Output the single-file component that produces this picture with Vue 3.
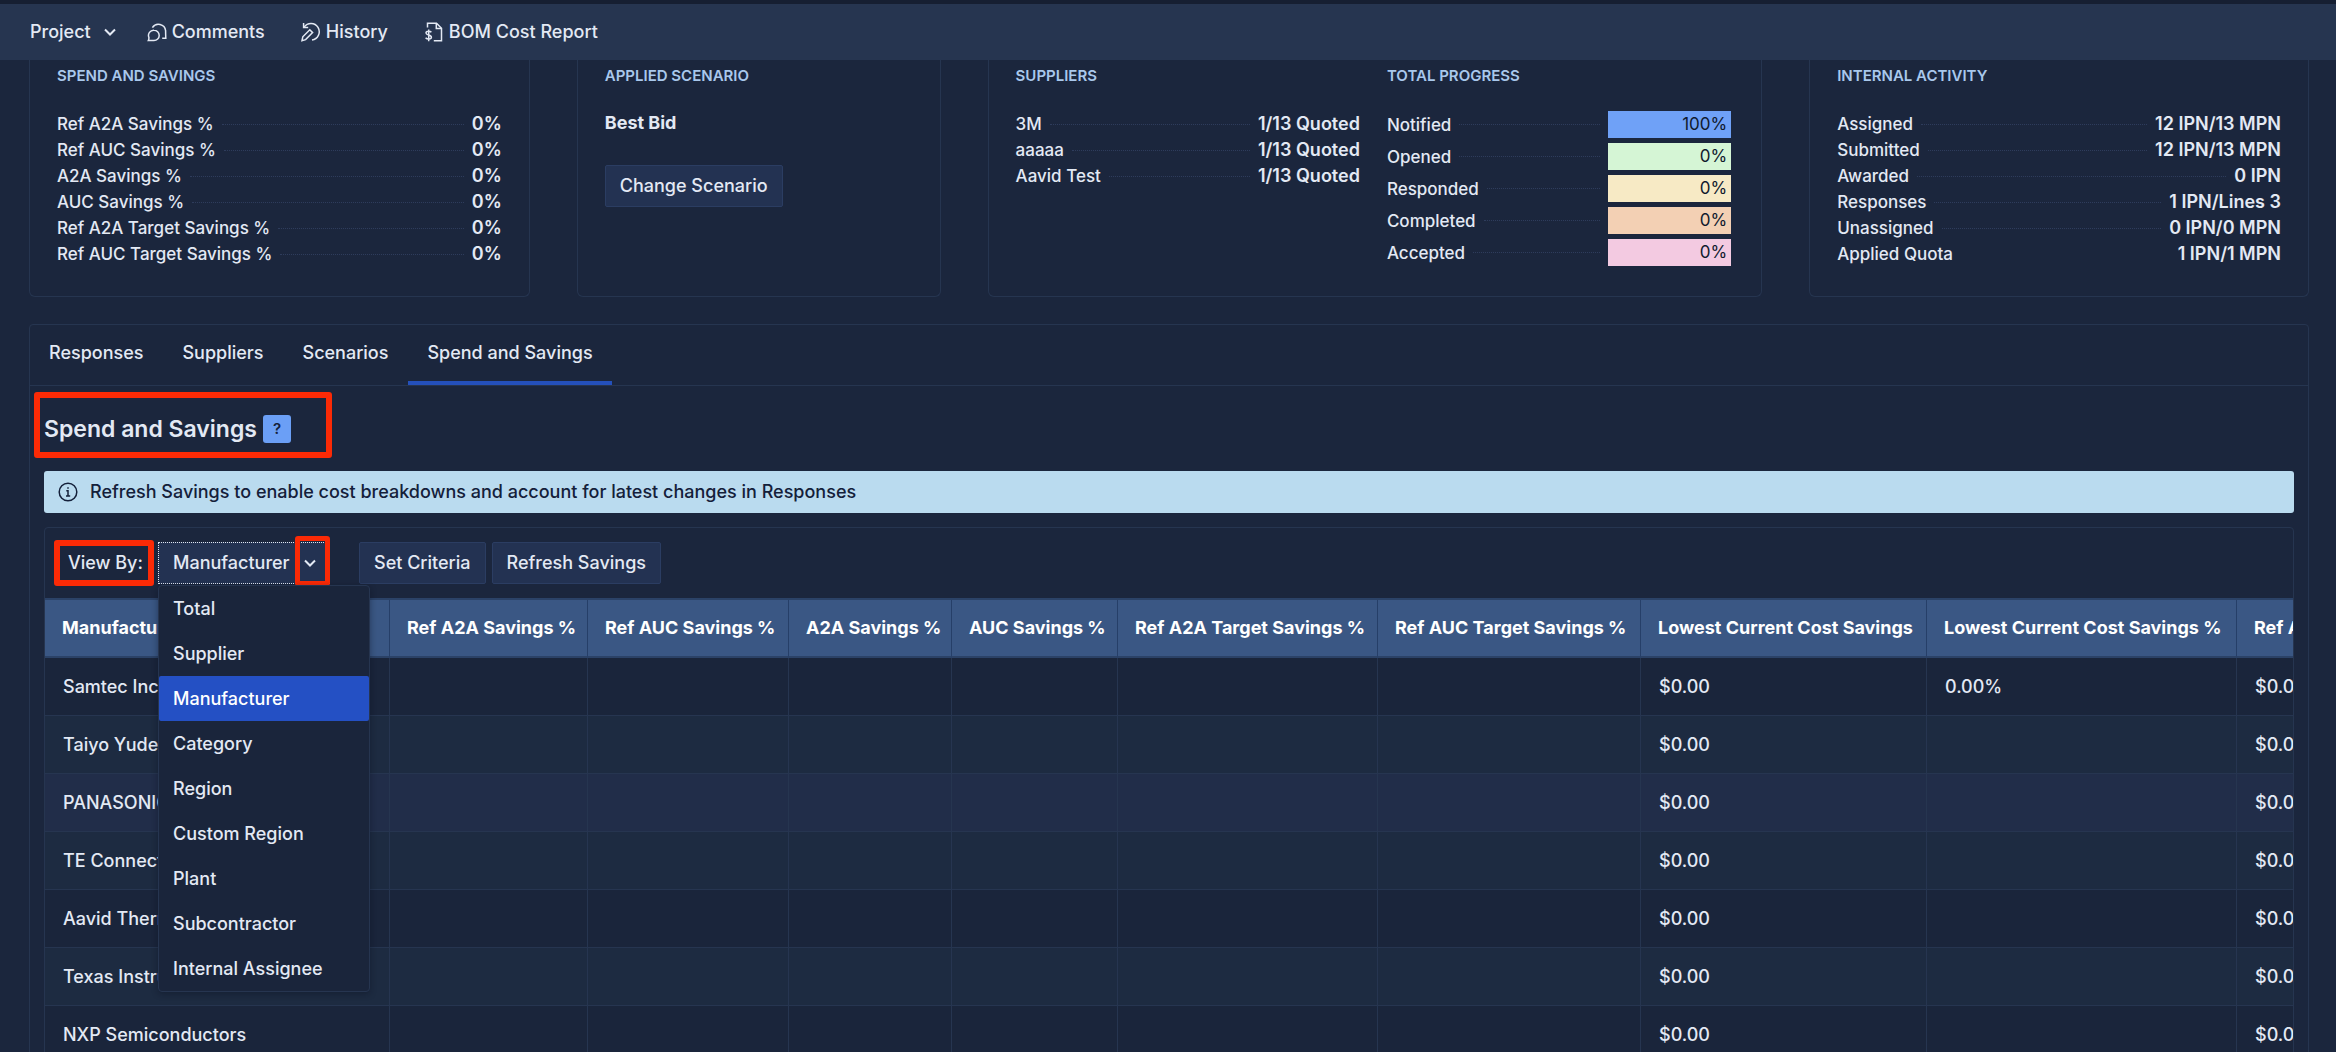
<template>
  <div class="page">
    <nav class="topnav">
      <button class="nav-item project" type="button">
        Project
        <svg class="chev" viewBox="0 0 14 10"><path d="M2 2.5l5 5 5-5" /></svg>
      </button>
      <a class="nav-item" href="#comments">
        <svg class="icon" viewBox="0 0 20 20">
          <path d="M5.400 5.600A7.200 7.200 0 0 1 18.600 8.600c0 2 .1 5.600.2 7.600h-3.600" />
          <path d="M7 8.200a5.200 5.200 0 1 1 0 10.400H1.300c.5-1 .7-2 .6-3.200A5.200 5.200 0 0 1 7 8.200z" />
        </svg>
        Comments
      </a>
      <a class="nav-item" href="#history">
        <svg class="icon" viewBox="0 0 20 20">
          <path d="M3.200 5.200A8.200 8.200 0 1 1 11 17.900" />
          <path d="M2.600 1v4.600h4.600" />
          <path d="M1 18.600l.8-3.800 7-7 2.800 2.800-7 7z" />
        </svg>
        History
      </a>
      <a class="nav-item" href="#bom-cost-report">
        <svg class="icon" viewBox="0 0 20 20">
          <path d="M3.500 5.500V1.200h9l5 5v12.600H9.800" />
          <path d="M12.300 1.200v5.200h5.200" />
          <path d="M7.400 10.300C6 8.700 2 8.900 2 11c0 2.600 5.400 1.400 5.400 4.200 0 2.200-4.200 2.300-5.800.5M4.700 7.500v11.800" />
        </svg>
        BOM Cost Report
      </a>
    </nav>

    <main class="content">
      <section class="cards">
        <div class="card">
          <h3>Spend and Savings</h3>
          <dl class="rows">
            <div v-for="label in savings" :key="label" class="row">
              <dt>{{ label }}</dt>
              <dd>0%</dd>
            </div>
          </dl>
        </div>

        <div class="card">
          <h3>Applied Scenario</h3>
          <p class="scenario">Best Bid</p>
          <button class="btn" type="button">Change Scenario</button>
        </div>

        <div class="card split">
          <div>
            <h3>Suppliers</h3>
            <dl class="rows">
              <div v-for="name in suppliers" :key="name" class="row">
                <dt>{{ name }}</dt>
                <dd>1/13 Quoted</dd>
              </div>
            </dl>
          </div>
          <div>
            <h3>Total Progress</h3>
            <dl class="progress">
              <div v-for="p in progress" :key="p.label" class="row">
                <dt>{{ p.label }}</dt>
                <dd :class="p.tone">{{ p.value }}</dd>
              </div>
            </dl>
          </div>
        </div>

        <div class="card">
          <h3>Internal Activity</h3>
          <dl class="rows">
            <div v-for="a in activity" :key="a.label" class="row" :class="{ plain: a.plain }">
              <dt>{{ a.label }}</dt>
              <dd>{{ a.value }}</dd>
            </div>
          </dl>
        </div>
      </section>

      <section class="panel">
        <div class="tabs" role="tablist">
          <button
            v-for="t in tabs"
            :key="t"
            type="button"
            role="tab"
            class="tab"
            :class="{ active: t === activeTab }"
            :aria-selected="t === activeTab"
            @click="activeTab = t"
          >{{ t }}</button>
        </div>

        <div class="body">
          <div class="title marked mark-title">
            <h2>Spend and Savings</h2>
            <button class="help" type="button">?</button>
          </div>

          <div class="alert">
            <svg viewBox="0 0 20 20"><circle cx="10" cy="10" r="8.800" /><path d="M8.300 8.800H10v5M8 14h4.200M10 5.200v1.600" /></svg>
            Refresh Savings to enable cost breakdowns and account for latest changes in Responses
          </div>

          <div class="grid-box">
            <div class="toolbar">
              <label class="marked mark-label" for="view-by">View By:</label>
              <div class="picker">
                <select id="view-by" v-model="viewBy">
                  <option v-for="o in options" :key="o">{{ o }}</option>
                </select>
                <span class="arrow marked mark-arrow">
                  <svg class="chev" viewBox="0 0 14 10"><path d="M2 2.500l5 5 5-5" /></svg>
                </span>
                <ul class="menu" role="listbox" aria-label="View By">
                  <li
                    v-for="o in options"
                    :key="o"
                    role="option"
                    :class="{ selected: o === viewBy }"
                    :aria-selected="o === viewBy"
                    @click="viewBy = o"
                  >{{ o }}</li>
                </ul>
              </div>
              <button class="btn" type="button">Set Criteria</button>
              <button class="btn" type="button">Refresh Savings</button>
            </div>

            <div class="table-wrap">
              <table>
                <colgroup>
                  <col v-for="c in columns" :key="c.key" :style="{ width: c.width + 'px' }" />
                </colgroup>
                <thead>
                  <tr>
                    <th v-for="c in columns" :key="c.key" scope="col">{{ c.title }}</th>
                  </tr>
                </thead>
                <tbody>
                  <tr v-for="r in rows" :key="r.name" :class="{ hovered: r.hovered }">
                    <td v-for="c in columns" :key="c.key">{{ r[c.key] }}</td>
                  </tr>
                </tbody>
              </table>
            </div>
          </div>
        </div>
      </section>
    </main>
  </div>
</template>

<script setup>
import { ref } from 'vue'

const savings = [
  'Ref A2A Savings %',
  'Ref AUC Savings %',
  'A2A Savings %',
  'AUC Savings %',
  'Ref A2A Target Savings %',
  'Ref AUC Target Savings %'
]

const suppliers = ['3M', 'aaaaa', 'Aavid Test']

const progress = [
  { label: 'Notified', value: '100%', tone: 'blue' },
  { label: 'Opened', value: '0%', tone: 'green' },
  { label: 'Responded', value: '0%', tone: 'yellow' },
  { label: 'Completed', value: '0%', tone: 'orange' },
  { label: 'Accepted', value: '0%', tone: 'pink' }
]

const activity = [
  { label: 'Assigned', value: '12 IPN/13 MPN' },
  { label: 'Submitted', value: '12 IPN/13 MPN' },
  { label: 'Awarded', value: '0 IPN' },
  { label: 'Responses', value: '1 IPN/Lines 3' },
  { label: 'Unassigned', value: '0 IPN/0 MPN' },
  { label: 'Applied Quota', value: '1 IPN/1 MPN', plain: true }
]

const tabs = ['Responses', 'Suppliers', 'Scenarios', 'Spend and Savings']
const activeTab = ref('Spend and Savings')

const options = [
  'Total',
  'Supplier',
  'Manufacturer',
  'Category',
  'Region',
  'Custom Region',
  'Plant',
  'Subcontractor',
  'Internal Assignee'
]
const viewBy = ref('Manufacturer')

const columns = [
  { key: 'name', title: 'Manufacturer', width: 345 },
  { key: 'refA2a', title: 'Ref A2A Savings %', width: 198 },
  { key: 'refAuc', title: 'Ref AUC Savings %', width: 201 },
  { key: 'a2a', title: 'A2A Savings %', width: 163 },
  { key: 'auc', title: 'AUC Savings %', width: 166 },
  { key: 'refA2aTarget', title: 'Ref A2A Target Savings %', width: 260 },
  { key: 'refAucTarget', title: 'Ref AUC Target Savings %', width: 263 },
  { key: 'lowest', title: 'Lowest Current Cost Savings', width: 286 },
  { key: 'lowestPct', title: 'Lowest Current Cost Savings %', width: 310 },
  { key: 'refCost', title: 'Ref A2A Savings', width: 200 }
]

const rows = [
  { name: 'Samtec Inc', lowestPct: '0.00%' },
  { name: 'Taiyo Yuden' },
  { name: 'PANASONIC', hovered: true },
  { name: 'TE Connectivity' },
  { name: 'Aavid Thermalloy' },
  { name: 'Texas Instruments' },
  { name: 'NXP Semiconductors' }
].map(r => ({ ...r, lowest: '$0.00', refCost: '$0.00' }))
</script>

<style>
body { margin: 0; background: #1b263d }
</style>

<style scoped>
.page {
  --line: #263550;
  height: 100vh; overflow: hidden; display: flex; flex-direction: column;
  background: #1b263d; color: #e3e9f4;
  font-family: Inter, "Liberation Sans", sans-serif; font-size: 18px; font-weight: 500; line-height: 26px;
}
*, *::before, *::after { box-sizing: border-box }
button, select { font: inherit; color: inherit; cursor: pointer }
h2, h3, p, dl, dd, ul { margin: 0; padding: 0 }
svg { fill: none; stroke: currentColor; stroke-width: 1.5; flex: none }

.topnav {
  flex: none; display: flex; align-items: center; height: 60px; padding: 0 30px;
  background: #263550; border-top: 4px solid #161f32;
}
.nav-item {
  display: flex; align-items: center; gap: 5px; margin-right: 36px; padding: 0;
  border: 0; background: none; color: #e3e9f4; text-decoration: none;
}
.project { gap: 12px; margin-right: 30px }
.icon { width: 20px; height: 20px }
.chev { width: 14px; height: 10px; stroke-width: 2 }

.content { flex: 1; min-height: 0; padding: 0 27px 0 29px }
.cards { display: grid; grid-template-columns: 501fr 364fr 775fr 500fr; gap: 47px }
.card { height: 237px; padding: 3px 27px 0; border: 1px solid var(--line); border-top: 0; border-radius: 0 0 6px 6px }
.split { display: grid; grid-template-columns: 1fr 1fr; gap: 27px; padding-right: 30px }
h3 { color: #a9c8ec; font-size: 15px; font-weight: 600; text-transform: uppercase }
.rows { margin-top: 22px }
.row { display: flex; align-items: center }
.row dt { display: flex; flex: 1; align-items: center; font-size: 17px; white-space: nowrap }
.row dt::after { content: ""; flex: 1; margin: 0 8px; border-top: 1px dotted #2e3c5c }
.plain dt::after { border: 0 }
.row dd { font-weight: 600; white-space: nowrap }
.progress { display: grid; gap: 5px; margin-top: 22px }
.progress dd {
  width: 123px; padding-right: 4px; color: #101a2e;
  font-size: 17px; font-weight: 400; line-height: 27px; text-align: right;
}
.blue { background: #6fa1f7 }
.green { background: #d5f5d5 }
.yellow { background: #f7eac5 }
.orange { background: #f3d0b4 }
.pink { background: #f3cae1 }
.scenario { margin-top: 21px; font-weight: 700 }
.btn {
  height: 42px; padding: 0 14px; border: 1px solid #2b3d62; border-radius: 2px;
  background: #233252; white-space: nowrap;
}
.scenario + .btn { margin-top: 29px }

.panel { margin-top: 27px; border: 1px solid var(--line); border-radius: 4px 4px 0 0 }
.tabs { display: flex; gap: 1px; border-bottom: 1px solid var(--line) }
.tab {
  height: 60px; padding: 0 19px; border: 0; border-bottom: 4px solid transparent;
  background: none;
}
.tab.active { border-color: #2450bb }
.body { padding: 0 14px }
.title { display: flex; align-items: center; gap: 6px; width: 274px; height: 85px }
h2 { font-size: 23px; font-weight: 600; line-height: 32px; white-space: nowrap }
.help {
  width: 28px; height: 28px; padding: 0; border: 0; border-radius: 3px;
  background: #6b9ff6; color: #14203a; font-size: 15px; font-weight: 600;
}
.alert {
  display: flex; align-items: center; gap: 12px; height: 42px; padding: 0 14px;
  border-radius: 3px; background: #badbef; color: #14203a;
}
.alert svg { width: 20px; height: 20px }

.grid-box { margin-top: 14px; border: 1px solid var(--line); border-radius: 4px 4px 0 0 }
.toolbar { display: flex; align-items: center; gap: 6px; height: 70px; padding: 0 23px }
.toolbar label { width: 84px; white-space: nowrap }
.picker { position: relative; display: flex; width: 172px; margin-right: 23px }
select {
  appearance: none; width: 100%; height: 42px; padding: 0 14px;
  border: 1px dotted #dfe6f2; border-radius: 0; outline: 0; background: #233252;
}
.arrow { position: absolute; top: 0; right: 0; display: grid; place-items: center; width: 35px; height: 42px; padding-right: 6px; pointer-events: none }

/* red call-outs drawn over the page */
.marked { position: relative }
.arrow.marked { position: absolute }
.marked::after { content: ""; position: absolute; border: 6px solid #fb2a06; border-radius: 3px; pointer-events: none }
.mark-title::after { inset: 6px -14px 13px -10px }
.mark-label::after { inset: -10px -2px -10px -14px }
.mark-arrow::after { inset: -6px 0 -2px 0; border-width: 5px }

.menu {
  position: absolute; top: 43px; left: 0; z-index: 2; width: 212px; list-style: none;
  border: 1px solid var(--line); border-radius: 4px; background: #1a253b; box-shadow: 0 2px 6px rgba(10, 16, 30, .4);
}
.menu li { padding: 0 14px; border-radius: 2px; line-height: 45px; cursor: pointer }
.menu .selected { background: #2450c4; color: #fff }

.table-wrap { overflow: hidden; border-top: 2px solid #2b4267 }
table { table-layout: fixed; width: 2392px; border-collapse: separate; border-spacing: 0 }
th, td { height: 58px; padding: 0 18px; text-align: left; white-space: nowrap; border-right: 1px solid var(--line) }
th { padding: 0 0 0 17px; border-right-color: #263f68; border-bottom: 2px solid #2b4267; background: #3a5784; color: #fff; font-weight: 700 }
td { border-bottom: 1px solid var(--line) }
tbody tr:nth-child(odd) { background: #1a253b }
tbody tr:nth-child(even) { background: #1d2b41 }
tbody tr.hovered { background: #212d49 }
</style>
